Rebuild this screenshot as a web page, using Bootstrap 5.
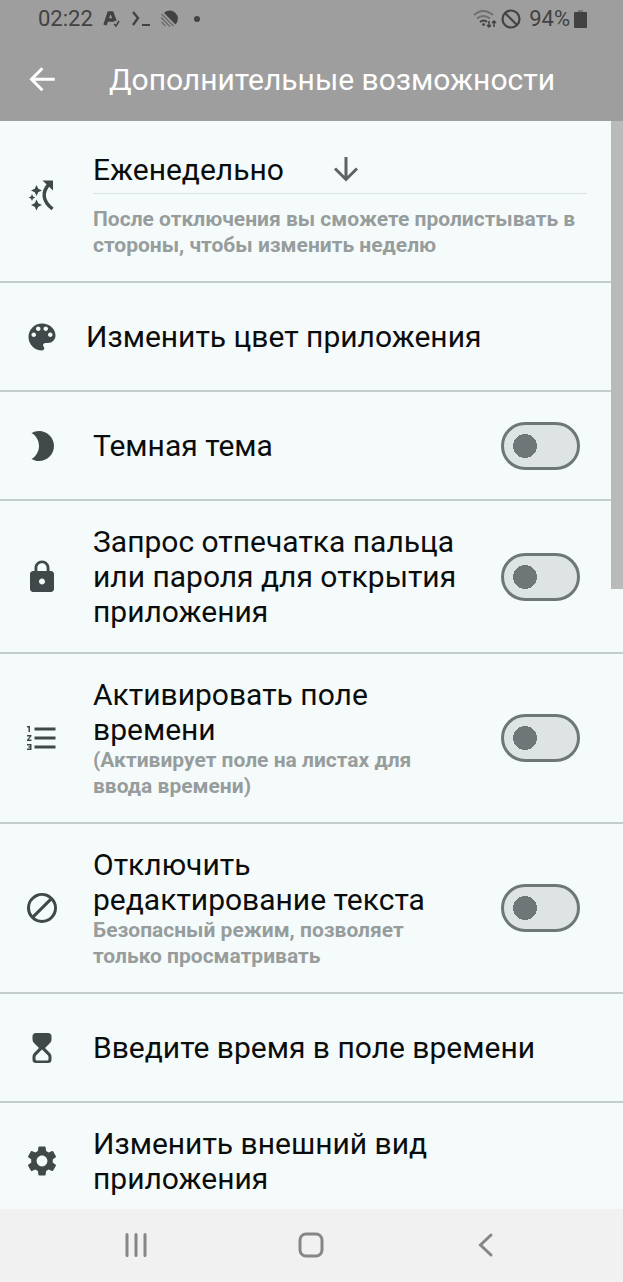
<!DOCTYPE html>
<html lang="ru">
<head>
<meta charset="utf-8">
<meta name="viewport" content="width=device-width, initial-scale=1">
<title>Дополнительные возможности</title>
<link href="https://cdn.jsdelivr.net/npm/bootstrap@5.3.0/dist/css/bootstrap.min.css" rel="stylesheet">
<style>
  :root { --page: #f5fbfb; --bar: #9e9e9e; --line: #c4cccc; --icon: #40484a; --hint: #979d9d; }
  body { font-family: Roboto, "Noto Sans", sans-serif; background: var(--page); color: #0b0d0d; }
  svg { display: block; flex: none; }
  .app-head { background: var(--bar); height: 121px; }
  .status { height: 38px; padding: 0 36px 0 38px; font-size: 22px; line-height: 38px; color: #424242; }
  .notes { gap: 9px; }
  .app-title { font-size: 30px; line-height: 36px; margin: 0; font-weight: 400; }
  .title-row { height: 83px; padding-left: 24px; gap: 49px; }
  .settings { overflow: hidden; min-height: 0; }
  .item { min-height: 110px; padding: 24px 43px 23px 24px; gap: 33px; border-bottom: 2px solid var(--line); margin-bottom: -1px; flex: none; }
  .item.tight { gap: 26px; }
  .item.wide { padding-right: 36px; }
  .item > svg { fill: var(--icon); }
  .item.wide > svg { margin-bottom: 14px; }
  .label-text { font-size: 30px; line-height: 35px; }
  .item .hint { font-size: 21px; line-height: 26px; font-weight: 700; color: var(--hint); }
  .copy { padding-right: 8px; }
  .picker { height: 49px; border-bottom: 1px solid #dbe3e3; margin-bottom: 12px; gap: 48px; }
  .picker select { appearance: none; border: 0; background: none; padding: 0; color: inherit; font-size: 30px; line-height: 35px; }
  .form-check-input.toggle {
    width: 79px; height: 48px; margin: 0; flex: none; border: 3px solid #6f7677; border-radius: 24px;
    background-color: #dee3e4; background-position: 9px center; background-size: 24px 24px; transition: none;
    background-image: radial-gradient(circle, #6f7677 12px, transparent 12px);
    background-repeat: no-repeat;
  }
  .form-check-input.toggle:checked { background-position: calc(100% - 9px) center; }
  .scroll-thumb { position: absolute; top: 0; right: 0; width: 12px; height: 43%; background: #bababb; }
  .sys-nav { background: #f1f1f1; height: 73px; flex: none; padding: 0 50px 2px 48px; }
  .sys-nav .btn { padding: 0; border: 0; flex: 1; display: flex; justify-content: center; }
  .sys-nav svg { fill: none; stroke: #868686; stroke-width: 3; stroke-linecap: round; }
</style>
</head>
<body>
<div class="d-flex flex-column vh-100">
  <header class="app-head flex-shrink-0">
    <div class="status d-flex justify-content-between align-items-center">
      <div class="notes d-flex align-items-center">
        <span>02:22</span>
        <svg width="20" height="18" viewBox="0 0 20 18" fill="none" stroke="#424242"><path d="M3 15 7 3h3l3 8M6 10h6" stroke-width="3.500"/><path d="m12 14 2 2 3-5" stroke-width="1.500"/></svg>
        <svg width="20" height="18" viewBox="0 0 20 18" fill="none" stroke="#424242"><path d="m2 2 5 6-5 7" stroke-width="2.400"/><path d="M11 15h8" stroke-width="2"/></svg>
        <svg width="20" height="18" viewBox="0 0 20 18"><path d="M4 3A8 8 0 0 1 15.500 14.500Z" fill="#424242"/><path d="m1.500 4 12 12M1 7.500l9 9M1.500 12l4 4" stroke="#6a6a6a" stroke-width="1.200"/></svg>
        <svg class="ms-1" width="8" height="8" viewBox="0 0 8 8"><circle cx="4" cy="4" r="3" fill="#424242"/></svg>
      </div>
      <div class="d-flex align-items-center">
        <svg width="24" height="20" viewBox="0 0 24 20" fill="none" stroke="#424242" stroke-width="2"><path d="M1 6q9-8 19 0M4 9.500q6.500-5 13 0" stroke="#6e6e6e"/><path d="M7 13q4-3 7 0"/><circle cx="10.500" cy="15.500" r="1" fill="#424242" stroke-width="1"/><path d="M16 12v6m-2-2 2 2 2-2M21 18v-6m-2 2 2-2 2 2" stroke-width="1.500"/></svg>
        <svg class="ms-1" width="20" height="20" viewBox="0 0 20 20" fill="none" stroke="#424242" stroke-width="2.200"><circle cx="10" cy="10" r="8.500"/><path d="m4 4 12 12"/></svg>
        <span class="ms-2">94%</span>
        <svg class="ms-1" width="13" height="20" viewBox="0 0 13 20"><path d="M4 1h5v3H4z" fill="#757575"/><rect y="3" width="13" height="16" rx="1" fill="#424242"/></svg>
      </div>
    </div>
    <div class="title-row d-flex align-items-center text-white">
      <button class="btn p-0 border-0" type="button" aria-label="Назад">
        <svg width="36" height="36" viewBox="0 0 24 24" fill="none" stroke="#fff" stroke-width="2"><path d="M20.500 11.500H5M12.300 4.200 5 11.500l7.300 7.300"/></svg>
      </button>
      <h1 class="app-title text-nowrap">Дополнительные возможности</h1>
    </div>
  </header>

  <div class="position-relative flex-grow-1 overflow-hidden">
  <main class="settings h-100 d-flex flex-column">
    <div class="item wide d-flex align-items-center">
      <svg width="36" height="36" viewBox="0 0 36 36"><path d="m12.500 8 1.800 3.700L18 13.500l-3.700 1.800-1.800 3.700-1.800-3.700L7 13.500l3.700-1.800zM8 17l1.100 2.400 2.400 1.100-2.400 1.100L8 24l-1.100-2.400-2.400-1.100 2.400-1.100zM12.500 22.500l1.800 3.700L18 28l-3.700 1.800-1.800 3.700-1.800-3.700L7 28l3.700-1.800zM18.500 3.500H29v10z"/><path d="M25.500 6.500Q13.500 20 28.500 32" fill="none" stroke="#40484a" stroke-width="3.500"/></svg>
      <div class="flex-grow-1">
        <div class="picker d-flex align-items-center">
          <select aria-label="Режим просмотра"><option>Еженедельно</option></select>
          <svg width="28" height="28" viewBox="0 0 28 28" fill="none" stroke="#5d6363" stroke-width="3"><path d="M14 2v22M3 13.500l11 11 11-11"/></svg>
        </div>
        <div class="hint">После отключения вы сможете пролистывать в стороны, чтобы изменить неделю</div>
      </div>
    </div>

    <a href="#color" class="item tight d-flex align-items-center text-reset text-decoration-none">
      <svg width="36" height="36" viewBox="0 0 24 24"><path d="M12 3c-4.970 0-9 4.030-9 9s4.030 9 9 9c.83 0 1.500-.67 1.500-1.500 0-.39-.15-.74-.39-1.010-.23-.26-.38-.61-.38-.99 0-.83.67-1.500 1.500-1.500H16c2.760 0 5-2.240 5-5 0-4.420-4.030-8-9-8zm-5.500 9c-.83 0-1.500-.67-1.500-1.500S5.670 9 6.500 9 8 9.670 8 10.500 7.330 12 6.500 12zm3-4C8.670 8 8 7.330 8 6.500S8.670 5 9.500 5s1.500.67 1.500 1.500S10.330 8 9.500 8zm5 0c-.83 0-1.500-.67-1.500-1.500S13.670 5 14.500 5s1.500.67 1.500 1.500S15.330 8 14.500 8zm3 4c-.83 0-1.500-.67-1.500-1.500S16.670 9 17.500 9s1.500.67 1.500 1.500-.67 1.500-1.500 1.500z"/></svg>
      <span class="label-text">Изменить цвет приложения</span>
    </a>

    <div class="item d-flex align-items-center">
      <svg width="36" height="36" viewBox="0 0 24 24"><path d="M10 2c-1.820 0-3.530.5-5 1.350C7.990 5.080 10 8.300 10 12s-2.010 6.920-5 8.650C6.470 21.500 8.180 22 10 22c5.520 0 10-4.480 10-10S15.520 2 10 2z"/></svg>
      <label class="copy label-text flex-grow-1" for="dark">Темная тема</label>
      <input class="form-check-input toggle" type="checkbox" role="switch" id="dark">
    </div>

    <div class="item d-flex align-items-center">
      <svg width="36" height="36" viewBox="0 0 24 24"><path d="M18 8h-1V6c0-2.760-2.240-5-5-5S7 3.240 7 6v2H6c-1.100 0-2 .9-2 2v10c0 1.100.9 2 2 2h12c1.100 0 2-.9 2-2V10c0-1.100-.9-2-2-2zm-6 9c-1.100 0-2-.9-2-2s.9-2 2-2 2 .9 2 2-.9 2-2 2zm3.100-9H8.900V6c0-1.710 1.390-3.100 3.100-3.100s3.100 1.390 3.100 3.100v2z"/></svg>
      <label class="copy label-text flex-grow-1" for="finger">Запрос отпечатка пальца или пароля для открытия приложения</label>
      <input class="form-check-input toggle" type="checkbox" role="switch" id="finger">
    </div>

    <div class="item d-flex align-items-center">
      <svg width="36" height="36" viewBox="0 0 24 24"><path d="M2 17h2v.5H3v1h1v.5H2v1h3v-4H2v1zm1-9h1V4H2v1h1v3zm-1 3h1.800L2 13.100v.9h3v-1H3.200L5 10.900V10H2v1zm5-6v2h14V5H7zm0 14h14v-2H7v2zm0-6h14v-2H7v2z"/></svg>
      <label class="copy flex-grow-1" for="time"><span class="label-text d-block">Активировать поле времени</span><span class="hint d-block">(Активирует поле на листах для ввода времени)</span></label>
      <input class="form-check-input toggle" type="checkbox" role="switch" id="time">
    </div>

    <div class="item d-flex align-items-center">
      <svg width="36" height="36" viewBox="0 0 24 24"><path d="M12 2a10 10 0 1 0 0 20 10 10 0 0 0 0-20zM4 12a8 8 0 0 1 12.900-6.310L5.690 16.900A8 8 0 0 1 4 12zm8 8a8 8 0 0 1-4.900-1.690L18.310 7.100A8 8 0 0 1 12 20z"/></svg>
      <label class="copy flex-grow-1" for="safe"><span class="label-text d-block">Отключить редактирование текста</span><span class="hint d-block">Безопасный режим, позволяет только просматривать</span></label>
      <input class="form-check-input toggle" type="checkbox" role="switch" id="safe">
    </div>

    <a href="#time-entry" class="item d-flex align-items-center text-reset text-decoration-none">
      <svg width="36" height="36" viewBox="0 0 36 36"><path fill-rule="evenodd" d="M12 3h12q3.500 0 3.500 3.500v3q0 2-1.500 3.500L21 18l5 5q1.500 1.500 1.500 3.500v3Q27.500 33 24 33H12q-3.500 0-3.500-3.500v-3q0-2 1.500-3.500l5-5-5-5q-1.500-1.500-1.500-3.500v-3Q8.500 3 12 3zm6 16.500-5.500 5.500q-1 1-1 2v2q0 1.500 1.500 1.500h10q1.500 0 1.500-1.500v-2q0-1-1-2z"/></svg>
      <span class="label-text">Введите время в поле времени</span>
    </a>

    <a href="#look" class="item d-flex align-items-center text-reset text-decoration-none">
      <svg width="36" height="36" viewBox="0 0 24 24"><path d="M19.140 12.940c.04-.3.06-.61.06-.94 0-.32-.02-.64-.07-.94l2.030-1.580c.18-.14.23-.41.12-.61l-1.920-3.320c-.12-.22-.37-.29-.59-.22l-2.390.96c-.5-.38-1.030-.7-1.620-.94l-.36-2.540c-.04-.24-.24-.41-.48-.41h-3.840c-.24 0-.43.17-.47.41l-.36 2.540c-.59.24-1.130.57-1.620.94l-2.390-.96c-.22-.08-.47 0-.59.22L2.740 8.870c-.12.21-.08.47.12.61l2.030 1.580c-.05.3-.09.63-.09.94s.02.64.07.94l-2.030 1.580c-.18.14-.23.41-.12.61l1.920 3.320c.12.22.37.29.59.22l2.390-.96c.5.38 1.030.7 1.620.94l.36 2.540c.05.24.24.41.48.41h3.840c.24 0 .44-.17.47-.41l.36-2.540c.59-.24 1.130-.56 1.620-.94l2.390.96c.22.08.47 0 .59-.22l1.920-3.320c.12-.22.07-.47-.12-.61l-2.010-1.580zM12 15.600c-1.980 0-3.600-1.620-3.600-3.600s1.620-3.600 3.600-3.600 3.600 1.620 3.600 3.600-1.620 3.600-3.600 3.600z"/></svg>
      <span class="label-text copy">Изменить внешний вид приложения</span>
    </a>
  </main>
  <div class="scroll-thumb"></div>
  </div>

  <nav class="sys-nav d-flex align-items-center" aria-label="Система">
    <button class="btn" type="button" aria-label="Недавние"><svg width="26" height="26" viewBox="0 0 26 26"><path d="M4 2.500v21M13 2.500v21M22 2.500v21"/></svg></button>
    <button class="btn" type="button" aria-label="Домой"><svg width="26" height="26" viewBox="0 0 26 26"><rect x="2" y="2" width="22" height="22" rx="6"/></svg></button>
    <button class="btn" type="button" aria-label="Назад"><svg width="26" height="26" viewBox="0 0 26 26"><path d="M18 3 7.500 13 18 23"/></svg></button>
  </nav>
</div>
<script src="https://cdn.jsdelivr.net/npm/bootstrap@5.3.0/dist/js/bootstrap.bundle.min.js"></script>
</body>
</html>
